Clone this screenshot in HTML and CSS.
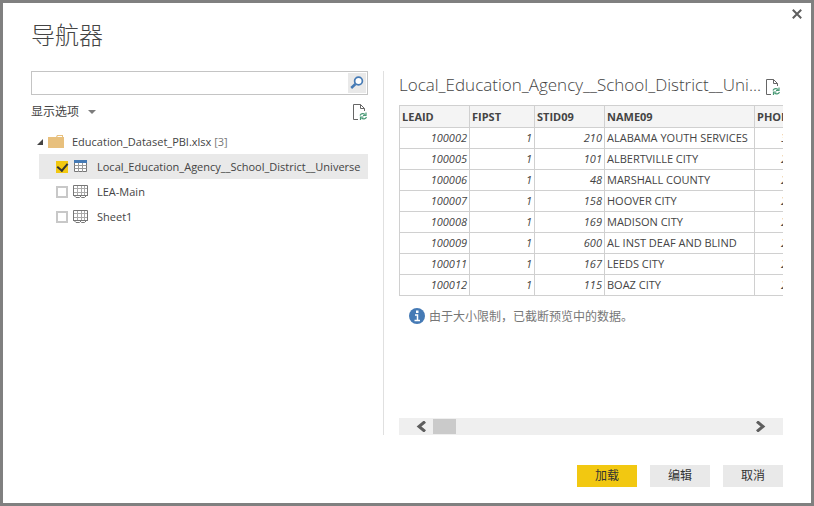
FILE: index.html
```html
<!DOCTYPE html>
<html lang="zh-CN">
<head>
<meta charset="utf-8">
<title>导航器</title>
<link rel="stylesheet" href="styles.css">
</head>
<body>
<svg class="symbols" aria-hidden="true">
  <symbol id="page-refresh" viewBox="0 0 16 17">
    <path d="M6 15.500H1.500V.5h7l4 4V7M8.500.5v4h4" fill="none" stroke="#666"/>
    <path d="M8 11.500c.8-2 3.500-2.500 5-.8M14 8.500v3h-3M14.500 13c-.8 2-3.500 2.500-5 .8M8.500 16v-3h3" fill="none" stroke="#4a9a76" stroke-width="1.200"/>
  </symbol>
  <symbol id="sheet" viewBox="0 0 16 15">
    <path d="M1 4.500h14M1 8.500h14M4.500 1v11M8.500 1v11M11.500 1v11" fill="none" stroke="#aaa"/>
    <path d="M.5 12V1.500h14V12M0 11.500h15M1.500 12l1.500 1.500h3.500L8 12M7 12l1.500 1.500h3L13 12" fill="none" stroke="#777"/>
  </symbol>
</svg>
<main class="dialog">
  <button class="close" type="button" aria-label="关闭">
    <svg width="10" height="10" viewBox="0 0 10 10"><path d="M.8.8l8.400 8.400M9.200.8L.8 9.200" stroke="#5e5e5e" stroke-width="2"/></svg>
  </button>
  <h1>导航器</h1>
  <div class="panes">
    <section class="browser">
      <form class="search">
        <input type="text" aria-label="搜索">
        <button type="button" aria-label="搜索">
          <svg width="14" height="14" viewBox="0 0 14 14"><circle cx="8.500" cy="5" r="3.900" fill="#fff" stroke="#457ab5" stroke-width="1.700"/><path d="M5.500 8L1.200 12" stroke="#457ab5" stroke-width="2.500"/></svg>
        </button>
      </form>
      <div class="options">
        <button class="menu" type="button">显示选项
          <svg width="8" height="4" viewBox="0 0 8 4"><path d="M0 0h8L4 4z" fill="#7c7c7c"/></svg>
        </button>
        <button class="refresh" type="button" aria-label="刷新"><svg width="16" height="17"><use href="#page-refresh"/></svg></button>
      </div>
      <div class="tree">
        <div class="folder">
          <svg width="6" height="6" viewBox="0 0 6 6"><path d="M6 0v6H0z" fill="#444"/></svg>
          <svg class="folder-icon" width="16" height="13" viewBox="0 0 16 13"><path d="M0 2h8l1-2h6v2h1v11H0z" fill="#e8c07d"/><path d="M9.500 1.500h4.500" stroke="#fff"/></svg>
          <span>Education_Dataset_PBI.xlsx <span class="count">[3]</span></span>
        </div>
        <label class="item selected">
          <input type="checkbox" checked>
          <svg width="16" height="15" viewBox="0 0 16 15"><path d="M1.500 1.500h12v11h-12z" fill="#fff" stroke="#777"/><path d="M1.500 6.500h12M1.500 9.500h12M5.500 4v9M9.500 4v9" stroke="#999"/><path d="M1 1h13v3H1z" fill="#457ab5"/></svg>
          <span>Local_Education_Agency__School_District__Universe</span>
        </label>
        <label class="item">
          <input type="checkbox">
          <svg width="16" height="15"><use href="#sheet"/></svg>
          <span>LEA-Main</span>
        </label>
        <label class="item">
          <input type="checkbox">
          <svg width="16" height="15"><use href="#sheet"/></svg>
          <span>Sheet1</span>
        </label>
      </div>
    </section>
    <section class="preview">
      <header>
        <h2>Local_Education_Agency__School_District__Uni...</h2>
        <button class="refresh" type="button" aria-label="刷新预览"><svg width="16" height="17"><use href="#page-refresh"/></svg></button>
      </header>
      <div class="grid">
        <table>
          <colgroup><col class="id"><col class="fips"><col class="id"><col class="name"><col class="phone"></colgroup>
          <thead><tr><th>LEAID</th><th>FIPST</th><th>STID09</th><th>NAME09</th><th>PHONE09</th></tr></thead>
          <tbody>
            <tr><td>100002</td><td>1</td><td>210</td><td>ALABAMA YOUTH SERVICES</td><td>3</td></tr>
            <tr><td>100005</td><td>1</td><td>101</td><td>ALBERTVILLE CITY</td><td>2</td></tr>
            <tr><td>100006</td><td>1</td><td>48</td><td>MARSHALL COUNTY</td><td>2</td></tr>
            <tr><td>100007</td><td>1</td><td>158</td><td>HOOVER CITY</td><td>2</td></tr>
            <tr><td>100008</td><td>1</td><td>169</td><td>MADISON CITY</td><td>2</td></tr>
            <tr><td>100009</td><td>1</td><td>600</td><td>AL INST DEAF AND BLIND</td><td>2</td></tr>
            <tr><td>100011</td><td>1</td><td>167</td><td>LEEDS CITY</td><td>2</td></tr>
            <tr><td>100012</td><td>1</td><td>115</td><td>BOAZ CITY</td><td>2</td></tr>
          </tbody>
        </table>
      </div>
      <p class="note">
        <svg width="16" height="16" viewBox="0 0 16 16"><circle cx="8" cy="8" r="8" fill="#457ab5"/><path d="M7 2.500h2.500V5H7z" fill="#fff"/><path d="M6 7h2.500v5.500M5.500 12.500H11" fill="none" stroke="#fff" stroke-width="1.500"/></svg>
        <span>由于大小限制，已截断预览中的数据。</span>
      </p>
      <div class="scrollbar">
        <button type="button" aria-label="向左滚动"><svg width="10" height="11" viewBox="0 0 10 11"><path d="M9 .5L3 5.500l6 5" fill="none" stroke="#5e5e5e" stroke-width="3"/></svg></button>
        <span class="thumb"></span>
        <button class="forward" type="button" aria-label="向右滚动"><svg width="10" height="11" viewBox="0 0 10 11"><path d="M1 .5l6 5-6 5" fill="none" stroke="#5e5e5e" stroke-width="3"/></svg></button>
      </div>
    </section>
  </div>
  <footer>
    <button class="primary" type="button">加载</button>
    <button type="button">编辑</button>
    <button type="button">取消</button>
  </footer>
</main>
</body>
</html>
```
FILE: styles.css
```css
* { box-sizing: border-box; }
body {
  margin: 0;
  color: #444;
  font: 12px/16px "Open Sans", "Noto Sans CJK SC", sans-serif;
}
svg { display: block; flex: none; }
.symbols { position: absolute; width: 0; height: 0; }
button {
  padding: 0;
  border: 0;
  background: none;
  color: inherit;
  font: inherit;
}
.dialog {
  position: relative;
  display: flex;
  flex-direction: column;
  min-height: 100vh;
  padding: 16px 28px;
  border: 3px solid #808080;
  background: #fff;
}
.close { position: absolute; top: 6px; right: 9px; }
h1, h2 { margin: 0; font-weight: 300; white-space: nowrap; }
h1 { font-size: 24px; line-height: 32px; }
.panes {
  display: grid;
  grid-template-columns: 352fr 400fr;
  flex: 1;
  margin-top: 20px;
}
.browser { min-width: 0; padding-right: 15px; }
.search {
  display: flex;
  height: 24px;
  border: 1px solid #c4c4c4;
}
.search input {
  flex: 1;
  min-width: 0;
  padding: 0 4px;
  border: 0;
  outline: 0;
  font: inherit;
}
.search button {
  display: grid;
  place-items: center;
  width: 18px;
  margin: 1px;
  background: #e9e9e9;
}
.options {
  display: flex;
  justify-content: space-between;
  align-items: center;
  height: 34px;
}
.menu { display: flex; align-items: center; gap: 9px; }
.tree { overflow: hidden; font-size: 11px; white-space: nowrap; }
.folder {
  display: flex;
  align-items: center;
  gap: 5px;
  height: 25px;
  padding-left: 6px;
}
.folder-icon { margin-right: 3px; }
.count { color: #777; }
.item {
  display: flex;
  align-items: center;
  gap: 5px;
  height: 25px;
  margin-left: 8px;
  padding-left: 17px;
  overflow: hidden;
}
.item span { margin-left: 3px; }
.selected { background: #e9e9e9; }
.item input {
  display: grid;
  flex: none;
  place-items: center;
  width: 12px;
  height: 12px;
  margin: 0;
  border: 2px solid #c8c8c8;
  background: #fff;
  appearance: none;
}
.item input:checked {
  padding-bottom: 2px;
  border: 0;
  background: #f2c811;
}
.item input:checked::after {
  width: 5px;
  height: 8px;
  border: solid #333;
  border-width: 0 2px 2px 0;
  content: "";
  transform: rotate(40deg);
}
.preview {
  display: flex;
  flex-direction: column;
  min-width: 0;
  padding-left: 15px;
  border-left: 1px solid #e0e0e0;
}
.preview header {
  display: flex;
  align-items: center;
  justify-content: space-between;
  height: 34px;
  padding: 0 2px 6px 0;
}
.preview .refresh { padding-top: 4px; }
h2 { font-size: 17px; line-height: 24px; }
.grid { overflow: hidden; }
table {
  width: 448px;
  border-collapse: collapse;
  table-layout: fixed;
}
.id { width: 70px; }
.fips { width: 65px; }
.name { width: 150px; }
.phone { width: 93px; }
th, td {
  height: 21px;
  padding: 0 2px;
  border: 1px solid #d0d0d0;
  font-size: 11px;
  text-align: right;
  white-space: nowrap;
}
th { height: 22px; background: #f4f4f4; text-align: left; }
td { font-style: italic; }
td:nth-child(4) { font-style: normal; text-align: left; }
td:last-child { padding-right: 60px; }
.note {
  display: flex;
  align-items: center;
  gap: 4px;
  margin: 11px 0 0 10px;
  color: #777;
}
.note span { padding-top: 2px; }
.scrollbar {
  display: flex;
  align-items: center;
  gap: 7px;
  height: 17px;
  margin-top: auto;
  padding: 0 17px;
  background: #efefef;
}
.thumb { width: 23px; height: 15px; background: #cacaca; }
.forward { margin-left: auto; }
footer {
  display: flex;
  justify-content: flex-end;
  gap: 13px;
  margin-top: 30px;
}
footer button { width: 60px; height: 22px; background: #e9e9e9; color: #333; }
footer .primary { background: #f2c811; }
```
